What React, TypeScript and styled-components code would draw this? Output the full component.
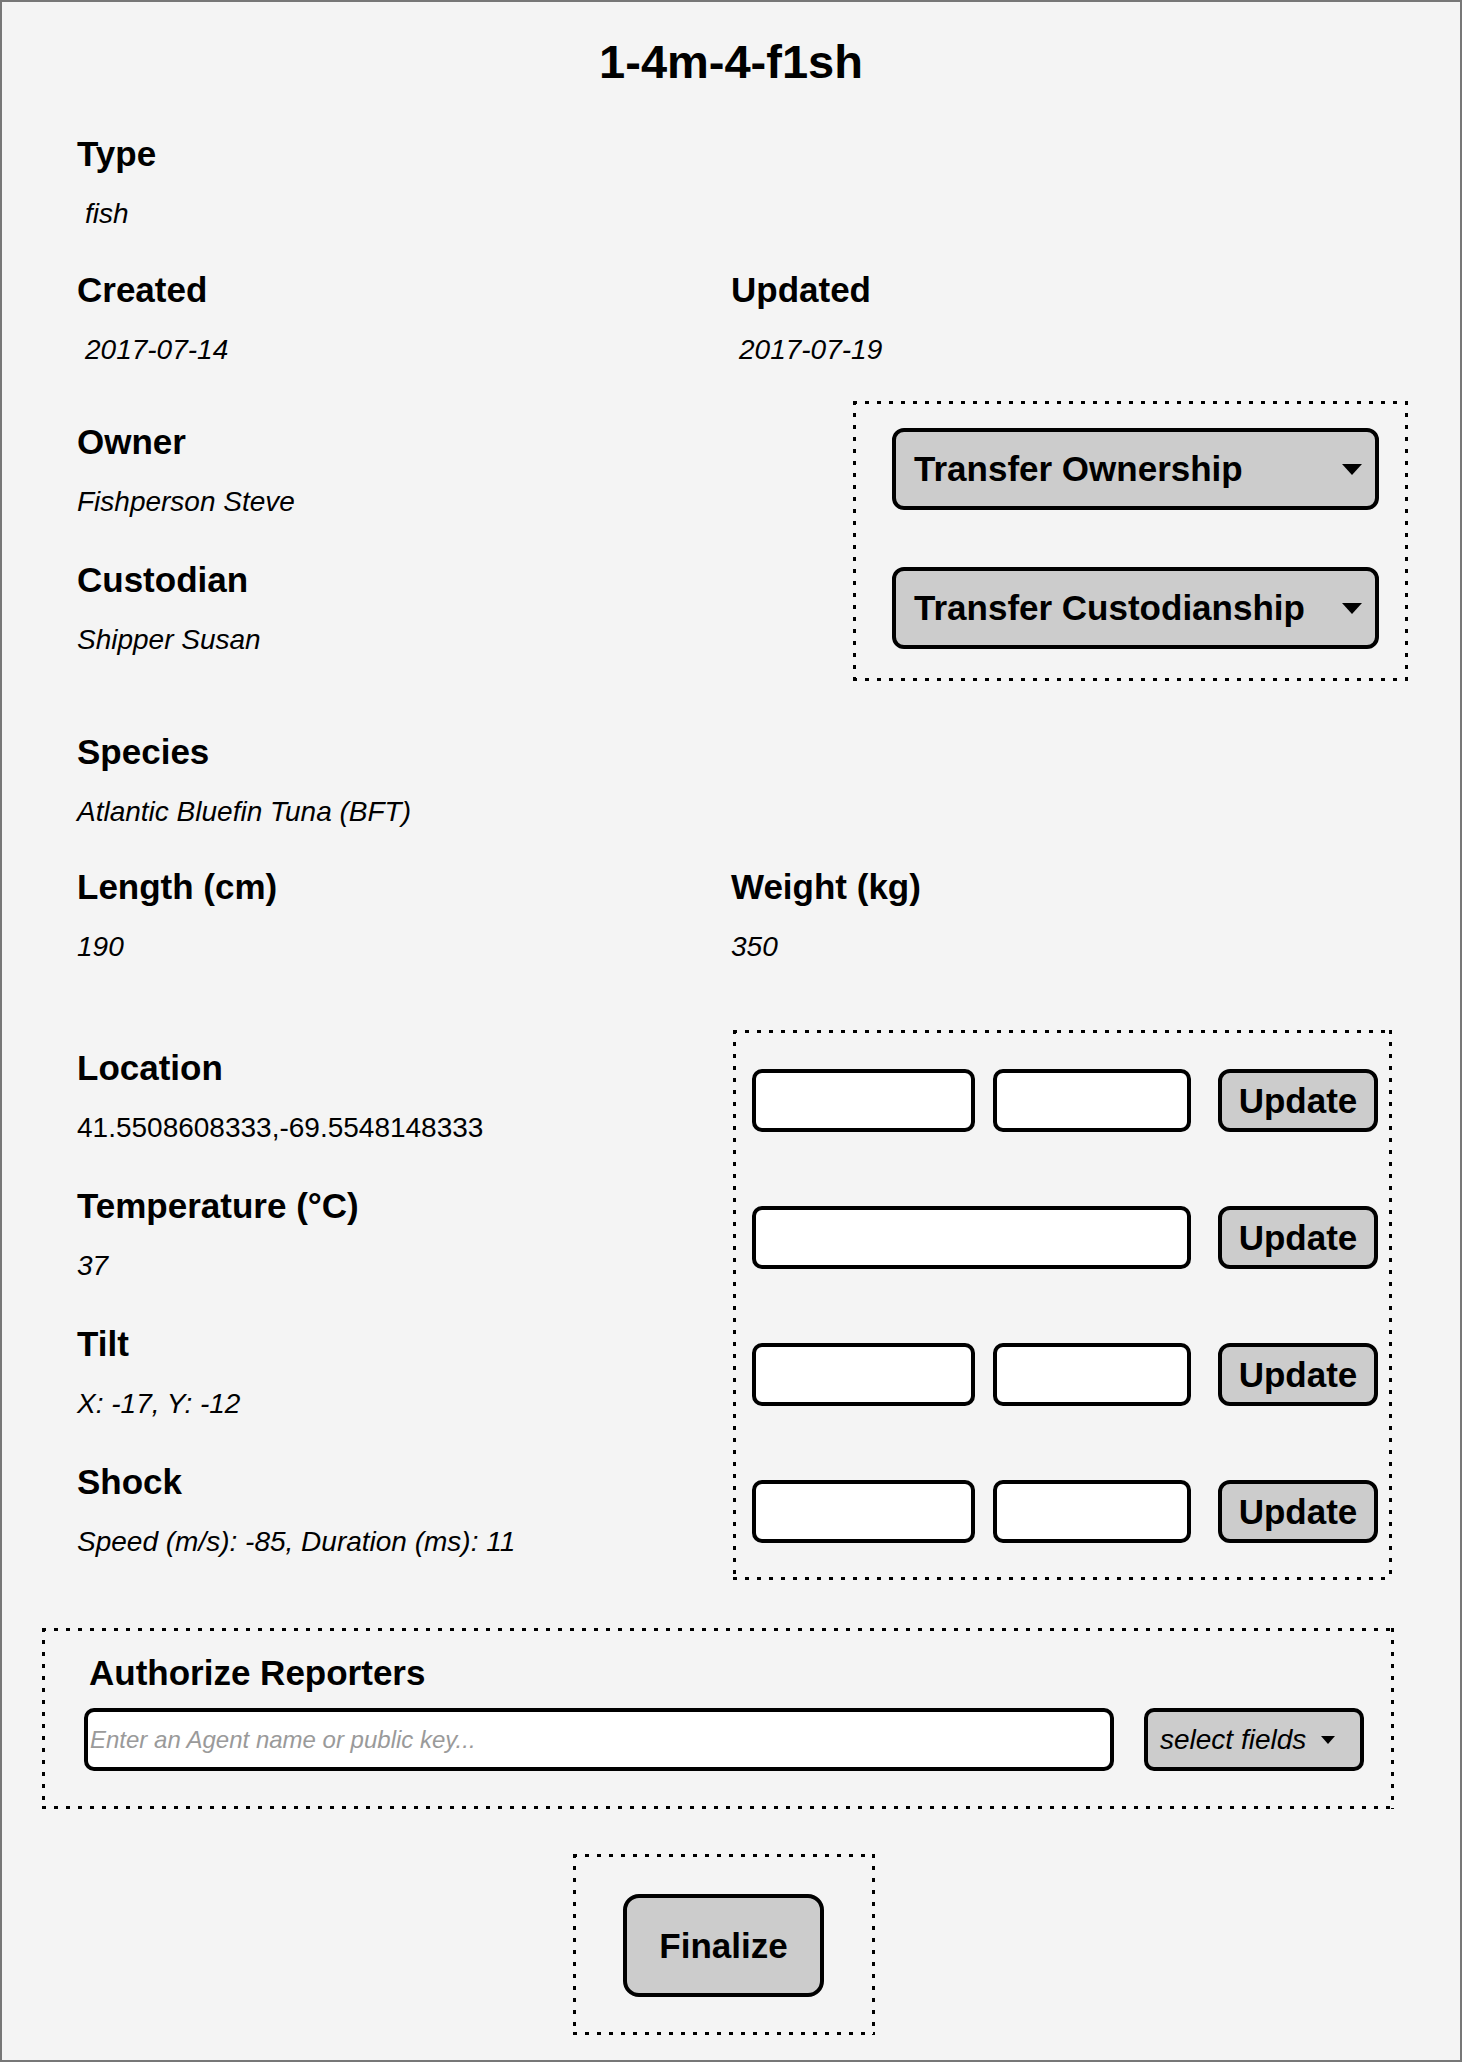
import React from 'react';
import styled, { createGlobalStyle } from 'styled-components';

const GlobalStyle = createGlobalStyle`
  html, body {
    margin: 0;
    padding: 0;
    background: #f4f4f4;
  }
  body {
    font-family: "Liberation Sans", Arial, Helvetica, sans-serif;
    color: #000;
  }
  * {
    box-sizing: border-box;
  }
`;

const PageStyled = styled.div`
  min-height: 100vh;
  border: 2px solid #777;
  background: #f4f4f4;
  padding: 33px 75px 23px;
  display: flex;
  flex-direction: column;
`;

const TitleStyled = styled.h1`
  margin: 0;
  font-size: 47px;
  line-height: 54px;
  font-weight: bold;
  text-align: center;
`;

const FieldStyled = styled.div<{ $mt?: number }>`
  margin-top: ${(p) => p.$mt ?? 0}px;
`;

const LabelStyled = styled.div`
  font-size: 35px;
  line-height: 40px;
  font-weight: bold;
  margin-bottom: 24px;
  white-space: nowrap;
`;

const ValueStyled = styled.div<{ $plain?: boolean; $indent?: boolean }>`
  font-size: 28px;
  line-height: 32px;
  font-style: ${(p) => (p.$plain ? 'normal' : 'italic')};
  padding-left: ${(p) => (p.$indent ? 8 : 0)}px;
  white-space: nowrap;
`;

const TwoColStyled = styled.div<{ $mt: number }>`
  display: grid;
  grid-template-columns: 1fr 1fr;
  margin-top: ${(p) => p.$mt}px;
`;

const SplitRowStyled = styled.div<{ $mt: number }>`
  display: flex;
  align-items: flex-start;
  justify-content: space-between;
  margin-top: ${(p) => p.$mt}px;
`;

const FieldColumnStyled = styled.div<{ $pt: number }>`
  display: flex;
  flex-direction: column;
  gap: 42px;
  padding-top: ${(p) => p.$pt}px;
`;

// dotted frame: square dots every 12px
const DottedBoxStyled = styled.div`
  border: 3px solid transparent;
  background-image:
    repeating-linear-gradient(to right, #000 0 4px, transparent 4px 12px),
    repeating-linear-gradient(to right, #000 0 4px, transparent 4px 12px),
    repeating-linear-gradient(to bottom, #000 0 4px, transparent 4px 12px),
    repeating-linear-gradient(to bottom, #000 0 4px, transparent 4px 12px);
  background-size: 100% 3px, 100% 3px, 3px 100%, 3px 100%;
  background-position: top left, bottom left, top left, top right;
  background-origin: border-box;
  background-repeat: no-repeat;
`;

const TransferBoxStyled = styled(DottedBoxStyled)`
  width: 555px;
  margin-right: -23px;
  padding: 24px 26px 29px 36px;
  display: flex;
  flex-direction: column;
  gap: 57px;
`;

const ButtonStyled = styled.button`
  font-family: inherit;
  font-size: 35px;
  font-weight: bold;
  color: #000;
  background: #ccc;
  border: 4px solid #000;
  border-radius: 12px;
  padding: 0;
  cursor: pointer;
`;

const DropButtonStyled = styled(ButtonStyled)`
  height: 82px;
  width: 100%;
  display: flex;
  align-items: center;
  justify-content: space-between;
  padding: 0 13px 0 18px;
  white-space: nowrap;
`;

const CaretStyled = styled.span<{ $small?: boolean }>`
  width: 0;
  height: 0;
  border-left: ${(p) => (p.$small ? 7 : 10)}px solid transparent;
  border-right: ${(p) => (p.$small ? 7 : 10)}px solid transparent;
  border-top: ${(p) => (p.$small ? 8 : 11)}px solid #000;
  flex-shrink: 0;
`;

const UpdateBoxStyled = styled(DottedBoxStyled)`
  width: 659px;
  margin-right: -7px;
  padding: 36px 11px 34px 16px;
  display: flex;
  flex-direction: column;
  gap: 74px;
`;

const UpdateRowStyled = styled.div`
  display: grid;
  grid-template-columns: 223px 198px 160px;
  column-gap: 18px;
  height: 63px;
`;

const TextInputStyled = styled.input<{ $wide?: boolean }>`
  height: 63px;
  width: 100%;
  background: #fff;
  border: 4px solid #000;
  border-radius: 10px;
  grid-column: ${(p) => (p.$wide ? 'span 2' : 'auto')};
  outline: none;
`;

const UpdateButtonStyled = styled(ButtonStyled)`
  width: 160px;
  height: 63px;
  margin-left: 9px;
`;

const AuthorizeBoxStyled = styled(DottedBoxStyled)`
  margin: 48px -9px 0 -35px;
  padding: 22px 27px 35px 39px;
`;

const AuthorizeTitleStyled = styled.div`
  font-size: 35px;
  line-height: 40px;
  font-weight: bold;
  padding-left: 5px;
  margin-bottom: 15px;
`;

const AuthorizeRowStyled = styled.div`
  display: flex;
  gap: 30px;
`;

const AgentInputStyled = styled.input`
  flex: 1;
  height: 63px;
  background: #fff;
  border: 4px solid #000;
  border-radius: 10px;
  padding: 0 2px;
  font-family: inherit;
  font-size: 24px;
  font-style: italic;
  outline: none;
  &::placeholder {
    color: #9a9a9a;
  }
`;

const SelectButtonStyled = styled.button`
  width: 220px;
  height: 63px;
  background: #ccc;
  border: 4px solid #000;
  border-radius: 10px;
  font-family: inherit;
  font-size: 28px;
  font-style: italic;
  color: #000;
  display: flex;
  align-items: center;
  gap: 15px;
  padding: 0 0 0 12px;
  white-space: nowrap;
`;

const FinalizeRowStyled = styled.div`
  display: flex;
  justify-content: center;
  padding-right: 14px;
  margin-top: 45px;
`;

const FinalizeBoxStyled = styled(DottedBoxStyled)`
  padding: 37px 48px 35px 47px;
`;

const FinalizeButtonStyled = styled(ButtonStyled)`
  width: 201px;
  height: 103px;
  border-radius: 16px;
`;

type FieldProps = { label: string; value: string; plain?: boolean; indent?: boolean; mt?: number };

const Field = ({ label, value, plain, indent, mt }: FieldProps) => (
  <FieldStyled $mt={mt}>
    <LabelStyled>{label}</LabelStyled>
    <ValueStyled $plain={plain} $indent={indent}>
      {value}
    </ValueStyled>
  </FieldStyled>
);

const updateRows = [{ wide: false }, { wide: true }, { wide: false }, { wide: false }];

const App = () => (
  <>
    <GlobalStyle />
    <PageStyled>
      <TitleStyled>1-4m-4-f1sh</TitleStyled>

      <Field label="Type" value="fish" indent mt={45} />

      <TwoColStyled $mt={40}>
        <Field label="Created" value="2017-07-14" indent />
        <Field label="Updated" value="2017-07-19" indent />
      </TwoColStyled>

      <SplitRowStyled $mt={35}>
        <FieldColumnStyled $pt={21}>
          <Field label="Owner" value="Fishperson Steve" />
          <Field label="Custodian" value="Shipper Susan" />
        </FieldColumnStyled>
        <TransferBoxStyled>
          <DropButtonStyled>
            Transfer Ownership
            <CaretStyled />
          </DropButtonStyled>
          <DropButtonStyled>
            Transfer Custodianship
            <CaretStyled />
          </DropButtonStyled>
        </TransferBoxStyled>
      </SplitRowStyled>

      <Field label="Species" value="Atlantic Bluefin Tuna (BFT)" mt={51} />

      <TwoColStyled $mt={39}>
        <Field label="Length (cm)" value="190" />
        <Field label="Weight (kg)" value="350" />
      </TwoColStyled>

      <SplitRowStyled $mt={67}>
        <FieldColumnStyled $pt={18}>
          <Field label="Location" value="41.5508608333,-69.5548148333" plain />
          <Field label="Temperature (°C)" value="37" />
          <Field label="Tilt" value="X: -17, Y: -12" />
          <Field label="Shock" value="Speed (m/s): -85, Duration (ms): 11" />
        </FieldColumnStyled>
        <UpdateBoxStyled>
          {updateRows.map((row, i) => (
            <UpdateRowStyled key={i}>
              {row.wide ? (
                <TextInputStyled $wide />
              ) : (
                <>
                  <TextInputStyled />
                  <TextInputStyled />
                </>
              )}
              <UpdateButtonStyled>Update</UpdateButtonStyled>
            </UpdateRowStyled>
          ))}
        </UpdateBoxStyled>
      </SplitRowStyled>

      <AuthorizeBoxStyled>
        <AuthorizeTitleStyled>Authorize Reporters</AuthorizeTitleStyled>
        <AuthorizeRowStyled>
          <AgentInputStyled placeholder="Enter an Agent name or public key..." />
          <SelectButtonStyled>
            select fields
            <CaretStyled $small />
          </SelectButtonStyled>
        </AuthorizeRowStyled>
      </AuthorizeBoxStyled>

      <FinalizeRowStyled>
        <FinalizeBoxStyled>
          <FinalizeButtonStyled>Finalize</FinalizeButtonStyled>
        </FinalizeBoxStyled>
      </FinalizeRowStyled>
    </PageStyled>
  </>
);

export default App;
